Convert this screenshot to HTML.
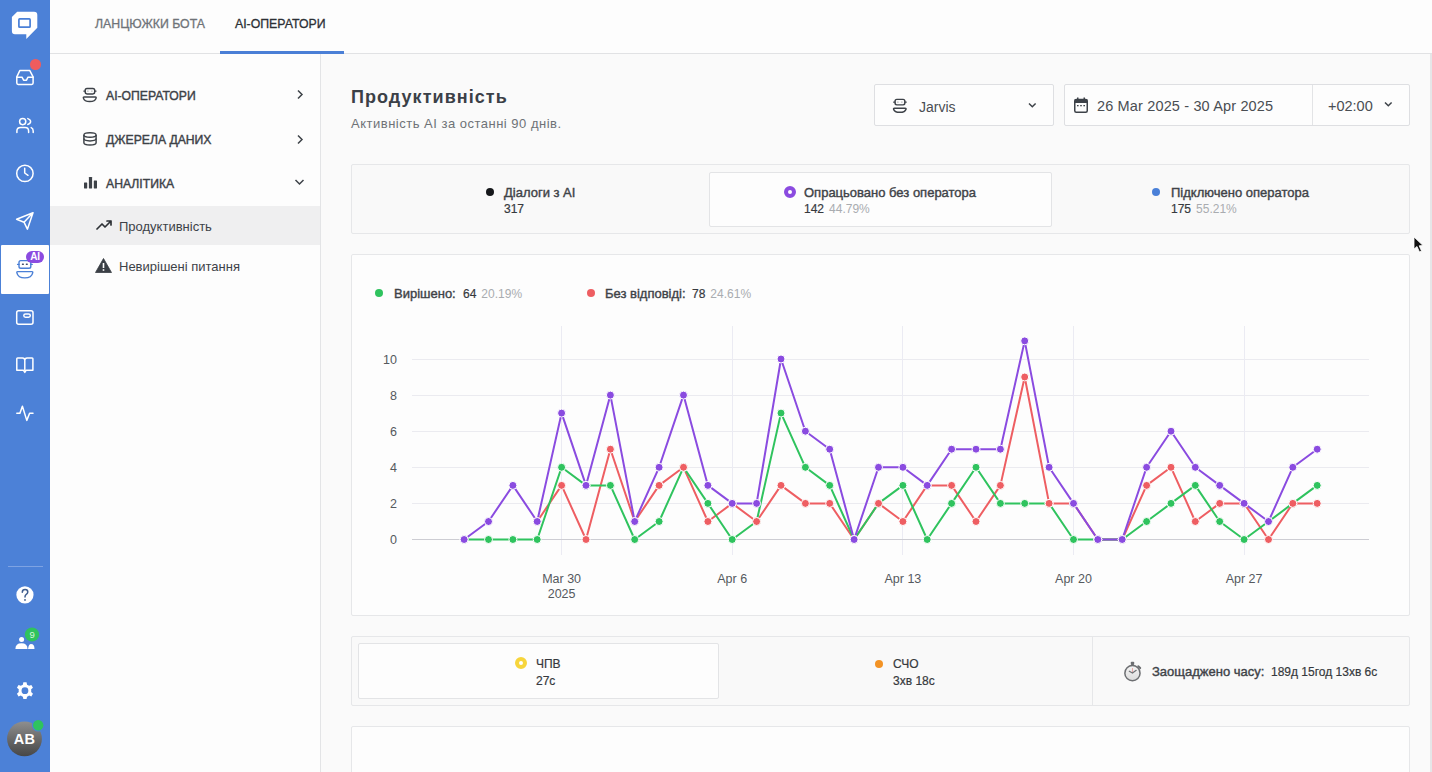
<!DOCTYPE html>
<html><head><meta charset="utf-8">
<style>
*{box-sizing:border-box;margin:0;padding:0}
html,body{width:1432px;height:772px;overflow:hidden;background:#fafafa;font-family:"Liberation Sans",sans-serif;color:#3d4146}
.abs{position:absolute}
#side{position:absolute;left:0;top:0;width:50px;height:772px;background:#4c81d7}
#top{position:absolute;left:50px;top:0;width:1382px;height:54px;background:#fdfdfd;border-bottom:1px solid #e1e2e4}
.tab{position:absolute;top:16px;font-size:12.3px;white-space:nowrap;line-height:16px;-webkit-text-stroke:0.3px currentColor}
#left{position:absolute;left:50px;top:54px;width:271px;height:718px;background:#fdfdfd;border-right:1px solid #e3e4e6}
.mi{position:absolute;left:56px;font-size:12.2px;color:#3d4248;white-space:nowrap;line-height:16px;-webkit-text-stroke:0.4px currentColor}
.si{position:absolute;left:69px;font-size:13px;color:#3d4248;white-space:nowrap;line-height:16px}
.card{position:absolute;border:1px solid #e6e7e9;border-radius:2px}
.lbl{position:absolute;font-size:13px;color:#3f4348;white-space:nowrap;line-height:14px;-webkit-text-stroke:0.4px currentColor}
.val{position:absolute;font-size:12px;color:#36393d;white-space:nowrap;line-height:14px;-webkit-text-stroke:0.2px currentColor}
.pct{color:#a9acb0;margin-left:5px;-webkit-text-stroke:0}
.ax{font-family:"Liberation Sans",sans-serif;font-size:12.5px;fill:#55595e}
svg{display:block}
</style></head><body>
<div id="side">
<svg class="abs" style="left:0;top:0" width="50" height="772" viewBox="0 0 50 772">
  <!-- logo -->
  <path d="M17.2,11.8 H34 Q37.3,11.8 37.3,15 V27.8 L26.3,39 V34.2 H15 Q11.9,34.2 11.9,31 V17 Z" fill="#fff"/>
  <rect x="18.9" y="18.9" width="11.2" height="8.3" rx="0.8" fill="none" stroke="#4a80d8" stroke-width="1.7"/>
  <g fill="none" stroke="#fff" stroke-width="1.5" stroke-linejoin="round" stroke-linecap="round">
  <!-- inbox -->
  <path d="M19.8,70.6 H29.8 L33.1,76.8 V83 Q33.1,84.4 31.7,84.4 H18.2 Q16.8,84.4 16.8,83 V76.8 Z"/>
  <path d="M16.8,77.2 H22 L23.6,80.2 H26.5 L28,77.2 H33.1"/>
  <!-- people -->
  <circle cx="22.7" cy="121.6" r="3.1"/>
  <path d="M16.9,132.4 V131 Q16.9,127.4 20.5,127.4 H25.2 Q28.6,127.4 28.6,131 V132.4"/>
  <path d="M27.8,118.6 Q30.6,119.5 30.6,121.6 Q30.6,123.7 27.8,124.4"/>
  <path d="M31.2,127.6 Q33.2,128.6 33.2,131 V132.4"/>
  <!-- clock -->
  <circle cx="24.9" cy="173.4" r="8.2"/>
  <path d="M24.7,168.3 V173 L28,175.3"/>
  <!-- send -->
  <path d="M33,212.7 L16.6,219.2 L24,222.2 L27.4,229.2 Z M24,222.2 L33,212.7"/>
  <!-- wallet -->
  <rect x="16.7" y="310.8" width="16.3" height="13.4" rx="2"/>
  <rect x="23.8" y="313.9" width="6.5" height="3.4" rx="1.7"/>
  <!-- book -->
  <path d="M24.8,360.2 Q24.8,357.9 22.5,357.9 H17.6 Q16.8,357.9 16.8,358.7 V370.2 H23.3 L24.8,372.4 L26.3,370.2 H32.9 V358.7 Q32.9,357.9 32.1,357.9 H27.1 Q24.8,357.9 24.8,360.2 V370"/>
  <!-- pulse -->
  <path d="M16.8,413.3 H19.9 L22.4,406.2 L26.8,420.4 L29.6,413.3 H33"/>
  </g>
  <!-- help -->
  <circle cx="24.95" cy="594.8" r="8.6" fill="#fff"/>
  <path d="M22.3,592.2 Q22.4,589.6 25.1,589.6 Q27.8,589.6 27.8,592 Q27.8,593.6 26,594.6 Q25,595.2 25,597" fill="none" stroke="#3f5d8e" stroke-width="1.5" stroke-linecap="round"/>
  <circle cx="25" cy="599.9" r="0.95" fill="#3f5d8e"/>
  <!-- team -->
  <circle cx="21.6" cy="639.4" r="2.5" fill="#fff"/>
  <path d="M15.4,649 Q15.4,643.3 21.5,643.3 Q27.5,643.3 27.5,649 Z" fill="#fff"/>
  <path d="M28.1,649 Q28.6,644 31,644 Q34.5,644 34.5,649 Z" fill="#fff"/>
  <circle cx="32" cy="634.5" r="7.1" fill="#2fc35e"/>
  <!-- gear -->
  <g transform="translate(24.95,690.7)">
    <path fill="#fff" fill-rule="evenodd" d="M-1.6,-8.4 H1.6 L2.1,-6 Q3.2,-5.6 4.1,-4.9 L6.4,-5.7 L8,-3 L6.2,-1.4 Q6.4,0 6.2,1.4 L8,3 L6.4,5.7 L4.1,4.9 Q3.2,5.6 2.1,6 L1.6,8.4 H-1.6 L-2.1,6 Q-3.2,5.6 -4.1,4.9 L-6.4,5.7 L-8,3 L-6.2,1.4 Q-6.4,0 -6.2,-1.4 L-8,-3 L-6.4,-5.7 L-4.1,-4.9 Q-3.2,-5.6 -2.1,-6 Z M3.4,0 A3.4,3.4 0 1 0 -3.4,0 A3.4,3.4 0 1 0 3.4,0 Z"/>
  </g>
  <line x1="8" y1="566.5" x2="43" y2="566.5" stroke="#7ea3e3" stroke-width="1"/>
  <!-- avatar -->
  <defs><linearGradient id="av" x1="0" y1="0" x2="0" y2="1"><stop offset="0" stop-color="#8e8e8e"/><stop offset="0.55" stop-color="#666"/><stop offset="1" stop-color="#474747"/></linearGradient></defs>
  <circle cx="24.5" cy="738.9" r="17.4" fill="url(#av)"/>
  <circle cx="38.2" cy="725.3" r="6.3" fill="#4c81d7"/>
  <circle cx="38.2" cy="725.3" r="5.2" fill="#2fc35e"/>
</svg>
  <div class="abs" style="left:30px;top:59px;width:10.5px;height:10.5px;border-radius:50%;background:#f05c5e"></div>
  <!-- active -->
  <div class="abs" style="left:1px;top:245px;width:47.5px;height:49px;background:#fff;border-radius:1px"></div>
  <svg class="abs" style="left:0;top:245px" width="50" height="49" viewBox="0 245 50 49" fill="none" stroke="#4a7fd6" stroke-width="1.4" stroke-linecap="round">
    <rect x="19" y="260.6" width="11.8" height="7.6" rx="1.8"/>
    <path d="M17.6,264.4 H19 M30.8,264.4 H32.2"/>
    <path d="M22.5,264.3 H23.3 M26.4,264.3 H27.2" stroke="#3d4a66"/>
    <path d="M17.6,271.6 Q16.6,271.6 16.9,272.8 Q18,277.9 24.8,277.9 Q31.6,277.9 32.7,272.8 Q33,271.6 32,271.6 Z"/>
  </svg>
  <div class="abs" style="left:26.3px;top:250.5px;width:17.7px;height:12.3px;border-radius:6.2px;background:#8b4be0;color:#fff;font-size:10px;font-weight:bold;line-height:12.3px;text-align:center">AI</div>
  <div class="abs" style="left:25px;top:627.5px;width:14.2px;height:14.2px;color:#d8f5dc;font-size:9.5px;line-height:14.2px;text-align:center">9</div>
  <div class="abs" style="left:7px;top:721.5px;width:35px;height:35px;color:#fff;font-size:14.5px;font-weight:bold;line-height:35px;text-align:center;letter-spacing:0.3px">AB</div>
</div>

<div id="top">
  <div class="tab" style="left:45px;color:#6f7378">ЛАНЦЮЖКИ БОТА</div>
  <div class="tab" style="left:185px;color:#2c3035">AI-ОПЕРАТОРИ</div>
  <div class="abs" style="left:170px;top:51px;width:124px;height:3px;background:#4a7fd6"></div>
</div>

<div id="left">
  <!-- AI operators icon -->
  <svg class="abs" style="left:30px;top:30px" width="20" height="20" viewBox="80 84 20 20" fill="none" stroke="#3d4248" stroke-width="1.45" stroke-linecap="round">
    <rect x="85.2" y="88.4" width="9.5" height="5.5" rx="1.8"/>
    <path d="M83.9,91.1 H85.2 M94.7,91.1 H96"/>
    <path d="M87.8,91.1 H88 M91.8,91.1 H92" stroke="#9a9ea3" stroke-width="1.2"/>
    <path d="M84.2,97 H95.3 Q96.4,97 96.1,98.1 Q95.2,101.5 89.75,101.5 Q84.3,101.5 83.4,98.1 Q83.1,97 84.2,97 Z"/>
  </svg>
  <div class="mi" style="top:34px">AI-ОПЕРАТОРИ</div>
  <svg class="abs" style="left:246px;top:35px" width="8" height="11" viewBox="0 0 8 11" fill="none" stroke="#3d4248" stroke-width="1.5"><path d="M2,1.5 L6,5.5 L2,9.5"/></svg>
  <!-- data sources -->
  <svg class="abs" style="left:30px;top:76px" width="20" height="20" viewBox="80 130 20 20" fill="none" stroke="#3d4248" stroke-width="1.45">
    <ellipse cx="90" cy="135" rx="6.1" ry="2.2"/>
    <path d="M83.9,135 V142.8 Q83.9,145 90,145 Q96.1,145 96.1,142.8 V135"/>
    <path d="M83.9,138.6 Q83.9,140.9 90,140.9 Q96.1,140.9 96.1,138.6"/>
  </svg>
  <div class="mi" style="top:78px">ДЖЕРЕЛА ДАНИХ</div>
  <svg class="abs" style="left:246px;top:80px" width="8" height="11" viewBox="0 0 8 11" fill="none" stroke="#3d4248" stroke-width="1.5"><path d="M2,1.5 L6,5.5 L2,9.5"/></svg>
  <!-- analytics -->
  <svg class="abs" style="left:33.5px;top:123px" width="14" height="12" viewBox="0 0 14 12" fill="#3d4248">
    <rect x="0" y="5.5" width="3.2" height="6" rx="0.4"/><rect x="4.9" y="0" width="3.2" height="11.5" rx="0.4"/><rect x="9.8" y="3.5" width="3.2" height="8" rx="0.4"/>
  </svg>
  <div class="mi" style="top:122px">АНАЛІТИКА</div>
  <svg class="abs" style="left:244px;top:124px" width="11" height="8" viewBox="0 0 11 8" fill="none" stroke="#3d4248" stroke-width="1.5"><path d="M1.5,2 L5.5,6 L9.5,2"/></svg>
  <div class="abs" style="left:0;top:152px;width:270px;height:39px;background:#efeff0"></div>
  <svg class="abs" style="left:46px;top:165px" width="17" height="12" viewBox="0 0 17 12" fill="none" stroke="#2d3136" stroke-width="1.7" stroke-linejoin="round" stroke-linecap="round">
    <path d="M1,10 L6,5 L9,8 L15,2 M11,2 H15 V6"/>
  </svg>
  <div class="si" style="top:165px">Продуктивність</div>
  <svg class="abs" style="left:45px;top:204px" width="17" height="15" viewBox="0 0 17 15">
    <path d="M8.5,0.5 L16.5,14.5 H0.5 Z" fill="#3a3f45" stroke="#3a3f45" stroke-width="0.8" stroke-linejoin="round"/>
    <rect x="7.7" y="5" width="1.6" height="5" fill="#fff"/><rect x="7.7" y="11.2" width="1.6" height="1.6" fill="#fff"/>
  </svg>
  <div class="si" style="top:205px">Невирішені питання</div>
</div>

<!-- header -->
<div class="abs" style="left:351px;top:87px;font-size:18px;font-weight:bold;color:#3b4047;white-space:nowrap;line-height:20px;letter-spacing:1.05px">Продуктивність</div>
<div class="abs" style="left:351px;top:116px;font-size:13px;color:#6e7277;white-space:nowrap;line-height:16px;letter-spacing:0.5px">Активність AI за останні 90 днів.</div>

<div class="card" style="left:874px;top:84px;width:180px;height:42px;background:#fdfdfd;border-color:#dedfe2"></div>
<svg class="abs" style="left:890px;top:96px" width="20" height="20" viewBox="890 96 20 20" fill="none" stroke="#3d4248" stroke-width="1.45" stroke-linecap="round">
  <rect x="895.05" y="99.35" width="9.8" height="5.5" rx="1.8"/>
  <path d="M893.7,102.1 H895 M904.9,102.1 H906.2"/>
  <path d="M897.8,102.1 H898 M901.8,102.1 H902" stroke="#9a9ea3" stroke-width="1.2"/>
  <path d="M894.4,108.15 H905.2 Q906.3,108.15 906,109.2 Q905.2,112.3 899.8,112.3 Q894.4,112.3 893.6,109.2 Q893.3,108.15 894.4,108.15 Z"/>
</svg>
<div class="abs" style="left:919px;top:99px;font-size:14px;color:#4a4e53;line-height:16px">Jarvis</div>
<svg class="abs" style="left:1027px;top:101px" width="11" height="8" viewBox="0 0 11 8" fill="none" stroke="#3d4248" stroke-width="1.5"><path d="M2,2.5 L5.3,5.8 L8.6,2.5"/></svg>

<div class="card" style="left:1064px;top:84px;width:346px;height:42px;background:#fdfdfd;border-color:#dedfe2"></div>
<div class="abs" style="left:1312px;top:85px;width:1px;height:40px;background:#e3e4e6"></div>
<svg class="abs" style="left:1074px;top:97px" width="14" height="16" viewBox="0 0 14 16">
  <rect x="0.75" y="2.5" width="12.5" height="12.75" rx="1.5" fill="none" stroke="#3d4248" stroke-width="1.5"/>
  <rect x="0.75" y="2.5" width="12.5" height="3.5" fill="#3d4248"/>
  <rect x="3" y="0.5" width="1.5" height="3" fill="#3d4248"/><rect x="9.5" y="0.5" width="1.5" height="3" fill="#3d4248"/>
  <rect x="3" y="8" width="1.6" height="1.3" fill="#3d4248"/><rect x="6.2" y="8" width="1.6" height="1.3" fill="#3d4248"/><rect x="9.4" y="8" width="1.6" height="1.3" fill="#3d4248"/>
</svg>
<div class="abs" style="left:1097px;top:97.5px;font-size:14.5px;color:#4a4e53;line-height:16px;white-space:nowrap;letter-spacing:0.15px">26 Mar 2025 - 30 Apr 2025</div>
<div class="abs" style="left:1328px;top:98px;font-size:14.5px;color:#4a4e53;line-height:16px">+02:00</div>
<svg class="abs" style="left:1383px;top:100px" width="11" height="8" viewBox="0 0 11 8" fill="none" stroke="#3d4248" stroke-width="1.5"><path d="M2,2.5 L5.3,5.8 L8.6,2.5"/></svg>

<!-- stats card -->
<div class="card" style="left:351px;top:164px;width:1059px;height:70px;background:#f9f9f9"></div>
<div class="abs" style="left:709px;top:172px;width:343px;height:55px;background:#fdfdfd;border:1px solid #e3e4e6;border-radius:2px"></div>
<div class="abs" style="left:486px;top:188px;width:8px;height:8px;border-radius:50%;background:#16181b"></div>
<div class="lbl" style="left:504px;top:186px">Діалоги з AI</div>
<div class="val" style="left:504px;top:202px">317</div>
<div class="abs" style="left:784px;top:186px;width:12px;height:12px;border-radius:50%;border:4px solid #8b4be0;background:#fff"></div>
<div class="lbl" style="left:804px;top:186px">Опрацьовано без оператора</div>
<div class="val" style="left:804px;top:202px">142<span class="pct">44.79%</span></div>
<div class="abs" style="left:1152px;top:188px;width:8px;height:8px;border-radius:50%;background:#4a80d8"></div>
<div class="lbl" style="left:1171px;top:186px">Підключено оператора</div>
<div class="val" style="left:1171px;top:202px">175<span class="pct">55.21%</span></div>

<!-- chart card -->
<div class="card" style="left:351px;top:254px;width:1059px;height:362px;background:#fdfdfd">
  <div class="abs" style="left:23px;top:34px;width:8px;height:8px;border-radius:50%;background:#2fc35e"></div>
  <div class="lbl" style="left:42px;top:32px">Вирішено:</div>
  <div class="val" style="left:111px;top:32px">64<span class="pct">20.19%</span></div>
  <div class="abs" style="left:235px;top:34px;width:8px;height:8px;border-radius:50%;background:#ee5e62"></div>
  <div class="lbl" style="left:253px;top:32px">Без відповіді:</div>
  <div class="val" style="left:340px;top:32px">78<span class="pct">24.61%</span></div>
  <svg width="1058" height="361" viewBox="0 0 1058 361" style="position:absolute;left:0;top:0">
<line x1="60" y1="248.5" x2="1017" y2="248.5" stroke="#ebebf0" stroke-width="1"/>
<line x1="60" y1="212.5" x2="1017" y2="212.5" stroke="#ebebf0" stroke-width="1"/>
<line x1="60" y1="176.5" x2="1017" y2="176.5" stroke="#ebebf0" stroke-width="1"/>
<line x1="60" y1="140.5" x2="1017" y2="140.5" stroke="#ebebf0" stroke-width="1"/>
<line x1="60" y1="104.5" x2="1017" y2="104.5" stroke="#ebebf0" stroke-width="1"/>
<line x1="209.5" y1="71" x2="209.5" y2="300" stroke="#ebebf3" stroke-width="1"/>
<line x1="380.5" y1="71" x2="380.5" y2="300" stroke="#ebebf3" stroke-width="1"/>
<line x1="550.5" y1="71" x2="550.5" y2="300" stroke="#ebebf3" stroke-width="1"/>
<line x1="721.5" y1="71" x2="721.5" y2="300" stroke="#ebebf3" stroke-width="1"/>
<line x1="892.5" y1="71" x2="892.5" y2="300" stroke="#ebebf3" stroke-width="1"/>
<line x1="60" y1="284.5" x2="1017" y2="284.5" stroke="#cdcdd3" stroke-width="1"/>
<text x="45" y="288.6" text-anchor="end" class="ax">0</text>
<text x="45" y="252.6" text-anchor="end" class="ax">2</text>
<text x="45" y="216.6" text-anchor="end" class="ax">4</text>
<text x="45" y="180.6" text-anchor="end" class="ax">6</text>
<text x="45" y="144.6" text-anchor="end" class="ax">8</text>
<text x="45" y="108.6" text-anchor="end" class="ax">10</text>
<text x="209.6" y="328" text-anchor="middle" class="ax">Mar 30</text>
<text x="380.2" y="328" text-anchor="middle" class="ax">Apr 6</text>
<text x="550.9" y="328" text-anchor="middle" class="ax">Apr 13</text>
<text x="721.5" y="328" text-anchor="middle" class="ax">Apr 20</text>
<text x="892.1" y="328" text-anchor="middle" class="ax">Apr 27</text>
<text x="209.6" y="343" text-anchor="middle" class="ax">2025</text>
<path d="M185.2,266.5 L209.6,230.4 L234.0,284.5 L258.4,194.2 L282.7,266.5 L307.1,230.4 L331.5,212.3 L355.9,266.5 L380.2,248.4 L404.6,266.5 L429.0,230.4 L453.4,248.4 L477.7,248.4 L502.1,284.5 L526.5,248.4 L550.9,266.5 L575.2,230.4 L599.6,230.4 L624.0,266.5 L648.4,230.4 L672.7,122.0 L697.1,248.4 L721.5,248.4 L745.8,284.5 L770.2,284.5 L794.6,230.4 L819.0,212.3 L843.3,266.5 L867.7,248.4 L892.1,248.4 L916.5,284.5 L940.8,248.4 L965.2,248.4" fill="none" stroke="#ee5e62" stroke-width="2" stroke-linejoin="round"/>
<path d="M112.1,284.5 L136.5,284.5 L160.9,284.5 L185.2,284.5 L209.6,212.3 L234.0,230.4 L258.4,230.4 L282.7,284.5 L307.1,266.5 L331.5,212.3 L355.9,248.4 L380.2,284.5 L404.6,266.5 L429.0,158.1 L453.4,212.3 L477.7,230.4 L502.1,284.5 L526.5,248.4 L550.9,230.4 L575.2,284.5 L599.6,248.4 L624.0,212.3 L648.4,248.4 L672.7,248.4 L697.1,248.4 L721.5,284.5 L745.8,284.5 L770.2,284.5 L794.6,266.5 L819.0,248.4 L843.3,230.4 L867.7,266.5 L892.1,284.5 L916.5,266.5 L940.8,248.4 L965.2,230.4" fill="none" stroke="#2fc35e" stroke-width="2" stroke-linejoin="round"/>
<path d="M112.1,284.5 L136.5,266.5 L160.9,230.4 L185.2,266.5 L209.6,158.1 L234.0,230.4 L258.4,140.1 L282.7,266.5 L307.1,212.3 L331.5,140.1 L355.9,230.4 L380.2,248.4 L404.6,248.4 L429.0,104.0 L453.4,176.2 L477.7,194.2 L502.1,284.5 L526.5,212.3 L550.9,212.3 L575.2,230.4 L599.6,194.2 L624.0,194.2 L648.4,194.2 L672.7,85.9 L697.1,212.3 L721.5,248.4 L745.8,284.5 L770.2,284.5 L794.6,212.3 L819.0,176.2 L843.3,212.3 L867.7,230.4 L892.1,248.4 L916.5,266.5 L940.8,212.3 L965.2,194.2" fill="none" stroke="#8a4be0" stroke-width="2" stroke-linejoin="round"/>
<circle cx="112.1" cy="284.5" r="4" fill="#2fc35e" stroke="#fff" stroke-width="1"/>
<circle cx="136.5" cy="284.5" r="4" fill="#2fc35e" stroke="#fff" stroke-width="1"/>
<circle cx="160.9" cy="284.5" r="4" fill="#2fc35e" stroke="#fff" stroke-width="1"/>
<circle cx="185.2" cy="284.5" r="4" fill="#2fc35e" stroke="#fff" stroke-width="1"/>
<circle cx="209.6" cy="212.3" r="4" fill="#2fc35e" stroke="#fff" stroke-width="1"/>
<circle cx="234.0" cy="230.4" r="4" fill="#2fc35e" stroke="#fff" stroke-width="1"/>
<circle cx="258.4" cy="230.4" r="4" fill="#2fc35e" stroke="#fff" stroke-width="1"/>
<circle cx="282.7" cy="284.5" r="4" fill="#2fc35e" stroke="#fff" stroke-width="1"/>
<circle cx="307.1" cy="266.5" r="4" fill="#2fc35e" stroke="#fff" stroke-width="1"/>
<circle cx="331.5" cy="212.3" r="4" fill="#2fc35e" stroke="#fff" stroke-width="1"/>
<circle cx="355.9" cy="248.4" r="4" fill="#2fc35e" stroke="#fff" stroke-width="1"/>
<circle cx="380.2" cy="284.5" r="4" fill="#2fc35e" stroke="#fff" stroke-width="1"/>
<circle cx="404.6" cy="266.5" r="4" fill="#2fc35e" stroke="#fff" stroke-width="1"/>
<circle cx="429.0" cy="158.1" r="4" fill="#2fc35e" stroke="#fff" stroke-width="1"/>
<circle cx="453.4" cy="212.3" r="4" fill="#2fc35e" stroke="#fff" stroke-width="1"/>
<circle cx="477.7" cy="230.4" r="4" fill="#2fc35e" stroke="#fff" stroke-width="1"/>
<circle cx="502.1" cy="284.5" r="4" fill="#2fc35e" stroke="#fff" stroke-width="1"/>
<circle cx="526.5" cy="248.4" r="4" fill="#2fc35e" stroke="#fff" stroke-width="1"/>
<circle cx="550.9" cy="230.4" r="4" fill="#2fc35e" stroke="#fff" stroke-width="1"/>
<circle cx="575.2" cy="284.5" r="4" fill="#2fc35e" stroke="#fff" stroke-width="1"/>
<circle cx="599.6" cy="248.4" r="4" fill="#2fc35e" stroke="#fff" stroke-width="1"/>
<circle cx="624.0" cy="212.3" r="4" fill="#2fc35e" stroke="#fff" stroke-width="1"/>
<circle cx="648.4" cy="248.4" r="4" fill="#2fc35e" stroke="#fff" stroke-width="1"/>
<circle cx="672.7" cy="248.4" r="4" fill="#2fc35e" stroke="#fff" stroke-width="1"/>
<circle cx="697.1" cy="248.4" r="4" fill="#2fc35e" stroke="#fff" stroke-width="1"/>
<circle cx="721.5" cy="284.5" r="4" fill="#2fc35e" stroke="#fff" stroke-width="1"/>
<circle cx="745.8" cy="284.5" r="4" fill="#2fc35e" stroke="#fff" stroke-width="1"/>
<circle cx="770.2" cy="284.5" r="4" fill="#2fc35e" stroke="#fff" stroke-width="1"/>
<circle cx="794.6" cy="266.5" r="4" fill="#2fc35e" stroke="#fff" stroke-width="1"/>
<circle cx="819.0" cy="248.4" r="4" fill="#2fc35e" stroke="#fff" stroke-width="1"/>
<circle cx="843.3" cy="230.4" r="4" fill="#2fc35e" stroke="#fff" stroke-width="1"/>
<circle cx="867.7" cy="266.5" r="4" fill="#2fc35e" stroke="#fff" stroke-width="1"/>
<circle cx="892.1" cy="284.5" r="4" fill="#2fc35e" stroke="#fff" stroke-width="1"/>
<circle cx="916.5" cy="266.5" r="4" fill="#2fc35e" stroke="#fff" stroke-width="1"/>
<circle cx="940.8" cy="248.4" r="4" fill="#2fc35e" stroke="#fff" stroke-width="1"/>
<circle cx="965.2" cy="230.4" r="4" fill="#2fc35e" stroke="#fff" stroke-width="1"/>
<circle cx="185.2" cy="266.5" r="4" fill="#ee5e62" stroke="#fff" stroke-width="1"/>
<circle cx="209.6" cy="230.4" r="4" fill="#ee5e62" stroke="#fff" stroke-width="1"/>
<circle cx="234.0" cy="284.5" r="4" fill="#ee5e62" stroke="#fff" stroke-width="1"/>
<circle cx="258.4" cy="194.2" r="4" fill="#ee5e62" stroke="#fff" stroke-width="1"/>
<circle cx="282.7" cy="266.5" r="4" fill="#ee5e62" stroke="#fff" stroke-width="1"/>
<circle cx="307.1" cy="230.4" r="4" fill="#ee5e62" stroke="#fff" stroke-width="1"/>
<circle cx="331.5" cy="212.3" r="4" fill="#ee5e62" stroke="#fff" stroke-width="1"/>
<circle cx="355.9" cy="266.5" r="4" fill="#ee5e62" stroke="#fff" stroke-width="1"/>
<circle cx="380.2" cy="248.4" r="4" fill="#ee5e62" stroke="#fff" stroke-width="1"/>
<circle cx="404.6" cy="266.5" r="4" fill="#ee5e62" stroke="#fff" stroke-width="1"/>
<circle cx="429.0" cy="230.4" r="4" fill="#ee5e62" stroke="#fff" stroke-width="1"/>
<circle cx="453.4" cy="248.4" r="4" fill="#ee5e62" stroke="#fff" stroke-width="1"/>
<circle cx="477.7" cy="248.4" r="4" fill="#ee5e62" stroke="#fff" stroke-width="1"/>
<circle cx="502.1" cy="284.5" r="4" fill="#ee5e62" stroke="#fff" stroke-width="1"/>
<circle cx="526.5" cy="248.4" r="4" fill="#ee5e62" stroke="#fff" stroke-width="1"/>
<circle cx="550.9" cy="266.5" r="4" fill="#ee5e62" stroke="#fff" stroke-width="1"/>
<circle cx="575.2" cy="230.4" r="4" fill="#ee5e62" stroke="#fff" stroke-width="1"/>
<circle cx="599.6" cy="230.4" r="4" fill="#ee5e62" stroke="#fff" stroke-width="1"/>
<circle cx="624.0" cy="266.5" r="4" fill="#ee5e62" stroke="#fff" stroke-width="1"/>
<circle cx="648.4" cy="230.4" r="4" fill="#ee5e62" stroke="#fff" stroke-width="1"/>
<circle cx="672.7" cy="122.0" r="4" fill="#ee5e62" stroke="#fff" stroke-width="1"/>
<circle cx="697.1" cy="248.4" r="4" fill="#ee5e62" stroke="#fff" stroke-width="1"/>
<circle cx="721.5" cy="248.4" r="4" fill="#ee5e62" stroke="#fff" stroke-width="1"/>
<circle cx="745.8" cy="284.5" r="4" fill="#ee5e62" stroke="#fff" stroke-width="1"/>
<circle cx="770.2" cy="284.5" r="4" fill="#ee5e62" stroke="#fff" stroke-width="1"/>
<circle cx="794.6" cy="230.4" r="4" fill="#ee5e62" stroke="#fff" stroke-width="1"/>
<circle cx="819.0" cy="212.3" r="4" fill="#ee5e62" stroke="#fff" stroke-width="1"/>
<circle cx="843.3" cy="266.5" r="4" fill="#ee5e62" stroke="#fff" stroke-width="1"/>
<circle cx="867.7" cy="248.4" r="4" fill="#ee5e62" stroke="#fff" stroke-width="1"/>
<circle cx="892.1" cy="248.4" r="4" fill="#ee5e62" stroke="#fff" stroke-width="1"/>
<circle cx="916.5" cy="284.5" r="4" fill="#ee5e62" stroke="#fff" stroke-width="1"/>
<circle cx="940.8" cy="248.4" r="4" fill="#ee5e62" stroke="#fff" stroke-width="1"/>
<circle cx="965.2" cy="248.4" r="4" fill="#ee5e62" stroke="#fff" stroke-width="1"/>
<circle cx="112.1" cy="284.5" r="4" fill="#8a4be0" stroke="#fff" stroke-width="1"/>
<circle cx="136.5" cy="266.5" r="4" fill="#8a4be0" stroke="#fff" stroke-width="1"/>
<circle cx="160.9" cy="230.4" r="4" fill="#8a4be0" stroke="#fff" stroke-width="1"/>
<circle cx="185.2" cy="266.5" r="4" fill="#8a4be0" stroke="#fff" stroke-width="1"/>
<circle cx="209.6" cy="158.1" r="4" fill="#8a4be0" stroke="#fff" stroke-width="1"/>
<circle cx="234.0" cy="230.4" r="4" fill="#8a4be0" stroke="#fff" stroke-width="1"/>
<circle cx="258.4" cy="140.1" r="4" fill="#8a4be0" stroke="#fff" stroke-width="1"/>
<circle cx="282.7" cy="266.5" r="4" fill="#8a4be0" stroke="#fff" stroke-width="1"/>
<circle cx="307.1" cy="212.3" r="4" fill="#8a4be0" stroke="#fff" stroke-width="1"/>
<circle cx="331.5" cy="140.1" r="4" fill="#8a4be0" stroke="#fff" stroke-width="1"/>
<circle cx="355.9" cy="230.4" r="4" fill="#8a4be0" stroke="#fff" stroke-width="1"/>
<circle cx="380.2" cy="248.4" r="4" fill="#8a4be0" stroke="#fff" stroke-width="1"/>
<circle cx="404.6" cy="248.4" r="4" fill="#8a4be0" stroke="#fff" stroke-width="1"/>
<circle cx="429.0" cy="104.0" r="4" fill="#8a4be0" stroke="#fff" stroke-width="1"/>
<circle cx="453.4" cy="176.2" r="4" fill="#8a4be0" stroke="#fff" stroke-width="1"/>
<circle cx="477.7" cy="194.2" r="4" fill="#8a4be0" stroke="#fff" stroke-width="1"/>
<circle cx="502.1" cy="284.5" r="4" fill="#8a4be0" stroke="#fff" stroke-width="1"/>
<circle cx="526.5" cy="212.3" r="4" fill="#8a4be0" stroke="#fff" stroke-width="1"/>
<circle cx="550.9" cy="212.3" r="4" fill="#8a4be0" stroke="#fff" stroke-width="1"/>
<circle cx="575.2" cy="230.4" r="4" fill="#8a4be0" stroke="#fff" stroke-width="1"/>
<circle cx="599.6" cy="194.2" r="4" fill="#8a4be0" stroke="#fff" stroke-width="1"/>
<circle cx="624.0" cy="194.2" r="4" fill="#8a4be0" stroke="#fff" stroke-width="1"/>
<circle cx="648.4" cy="194.2" r="4" fill="#8a4be0" stroke="#fff" stroke-width="1"/>
<circle cx="672.7" cy="85.9" r="4" fill="#8a4be0" stroke="#fff" stroke-width="1"/>
<circle cx="697.1" cy="212.3" r="4" fill="#8a4be0" stroke="#fff" stroke-width="1"/>
<circle cx="721.5" cy="248.4" r="4" fill="#8a4be0" stroke="#fff" stroke-width="1"/>
<circle cx="745.8" cy="284.5" r="4" fill="#8a4be0" stroke="#fff" stroke-width="1"/>
<circle cx="770.2" cy="284.5" r="4" fill="#8a4be0" stroke="#fff" stroke-width="1"/>
<circle cx="794.6" cy="212.3" r="4" fill="#8a4be0" stroke="#fff" stroke-width="1"/>
<circle cx="819.0" cy="176.2" r="4" fill="#8a4be0" stroke="#fff" stroke-width="1"/>
<circle cx="843.3" cy="212.3" r="4" fill="#8a4be0" stroke="#fff" stroke-width="1"/>
<circle cx="867.7" cy="230.4" r="4" fill="#8a4be0" stroke="#fff" stroke-width="1"/>
<circle cx="892.1" cy="248.4" r="4" fill="#8a4be0" stroke="#fff" stroke-width="1"/>
<circle cx="916.5" cy="266.5" r="4" fill="#8a4be0" stroke="#fff" stroke-width="1"/>
<circle cx="940.8" cy="212.3" r="4" fill="#8a4be0" stroke="#fff" stroke-width="1"/>
<circle cx="965.2" cy="194.2" r="4" fill="#8a4be0" stroke="#fff" stroke-width="1"/>
</svg>
</div>

<!-- bottom stats -->
<div class="card" style="left:351px;top:636px;width:1059px;height:70px;background:#f9f9f9"></div>
<div class="abs" style="left:358px;top:643px;width:361px;height:56px;background:#fdfdfd;border:1px solid #e3e4e6;border-radius:2px"></div>
<div class="abs" style="left:1092px;top:637px;width:1px;height:68px;background:#e6e7e9"></div>
<div class="abs" style="left:515px;top:657px;width:12px;height:12px;border-radius:50%;border:4px solid #f7d53c;background:#fff"></div>
<div class="val" style="left:536px;top:657px">ЧПВ</div>
<div class="val" style="left:536px;top:674px">27с</div>
<div class="abs" style="left:875px;top:660px;width:8px;height:8px;border-radius:50%;background:#f39325"></div>
<div class="val" style="left:893px;top:657px">СЧО</div>
<div class="val" style="left:893px;top:674px">3хв 18с</div>
<svg class="abs" style="left:1118px;top:656px" width="30" height="30" viewBox="1118 656 30 30">
  <rect x="1130.8" y="661.8" width="3.4" height="3.2" rx="0.8" fill="#6d6f72"/>
  <path d="M1138.3,666.3 L1140.2,668.1" stroke="#6d6f72" stroke-width="2" stroke-linecap="round"/>
  <defs><linearGradient id="sw" x1="0" y1="0" x2="0" y2="1"><stop offset="0" stop-color="#f4f4f4"/><stop offset="1" stop-color="#dcdcdc"/></linearGradient></defs>
  <circle cx="1132.45" cy="673.2" r="7.6" fill="url(#sw)" stroke="#6d6f72" stroke-width="1.5"/>
  <path d="M1132.5,668 V672.8" stroke="#e8a0a0" stroke-width="0.9"/>
  <path d="M1129.3,671.2 L1132.5,673 L1136.2,670.3" fill="none" stroke="#707275" stroke-width="1.2" stroke-linecap="round"/>
</svg>
<div class="lbl" style="left:1152px;top:665px">Заощаджено часу:</div>
<div class="val" style="left:1271px;top:665px">189д 15год 13хв 6с</div>

<!-- next card -->
<div class="card" style="left:351px;top:726px;width:1059px;height:60px;background:#fdfdfd"></div>

<!-- scrollbar edge -->
<div class="abs" style="left:1430px;top:54px;width:2px;height:718px;background:#e6e6e8"></div>
<!-- cursor -->
<svg class="abs" style="left:1413px;top:236px" width="12" height="18" viewBox="0 0 12 18">
  <path d="M1,1 L1,13 L4,10.5 L6.5,16 L8.5,15 L6.2,9.8 L10,9.5 Z" fill="#111" stroke="#fff" stroke-width="0.8"/>
</svg>
</body></html>
